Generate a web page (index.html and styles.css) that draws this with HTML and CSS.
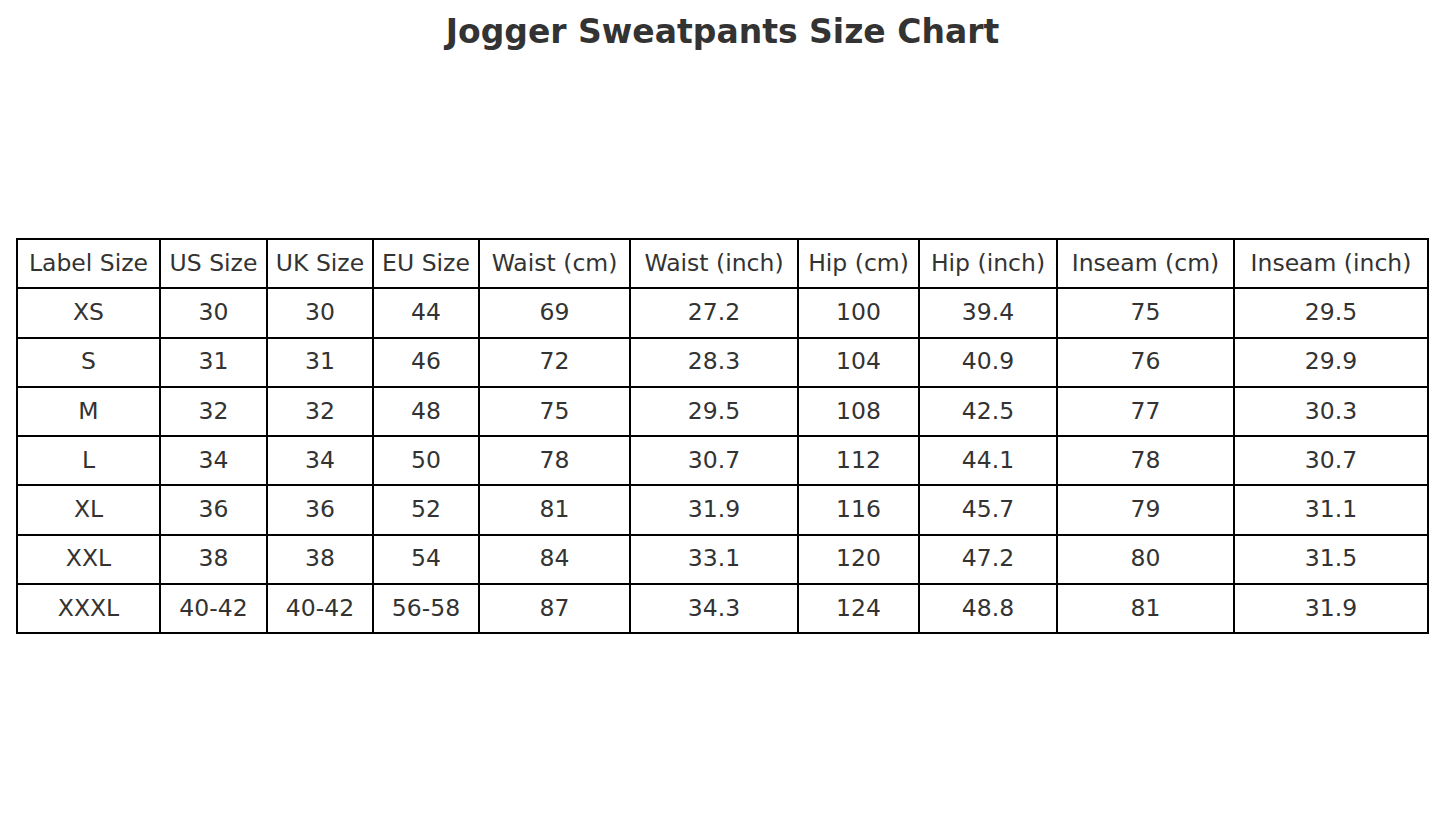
FILE: index.html
```html
<!DOCTYPE html>
<html>
<head>
<meta charset="utf-8">
<link rel="stylesheet" href="styles.css">
</head>
<body>
<h1 class="title">Jogger Sweatpants Size Chart</h1>
<table class="chart">
<colgroup>
<col class="c1"><col class="c2"><col class="c3"><col class="c4"><col class="c5"><col class="c6"><col class="c7"><col class="c8"><col class="c9"><col class="c10">
</colgroup>
<tr><td>Label Size</td><td>US Size</td><td>UK Size</td><td>EU Size</td><td>Waist (cm)</td><td>Waist (inch)</td><td>Hip (cm)</td><td>Hip (inch)</td><td>Inseam (cm)</td><td>Inseam (inch)</td></tr>
<tr><td>XS</td><td>30</td><td>30</td><td>44</td><td>69</td><td>27.2</td><td>100</td><td>39.4</td><td>75</td><td>29.5</td></tr>
<tr><td>S</td><td>31</td><td>31</td><td>46</td><td>72</td><td>28.3</td><td>104</td><td>40.9</td><td>76</td><td>29.9</td></tr>
<tr><td>M</td><td>32</td><td>32</td><td>48</td><td>75</td><td>29.5</td><td>108</td><td>42.5</td><td>77</td><td>30.3</td></tr>
<tr><td>L</td><td>34</td><td>34</td><td>50</td><td>78</td><td>30.7</td><td>112</td><td>44.1</td><td>78</td><td>30.7</td></tr>
<tr><td>XL</td><td>36</td><td>36</td><td>52</td><td>81</td><td>31.9</td><td>116</td><td>45.7</td><td>79</td><td>31.1</td></tr>
<tr><td>XXL</td><td>38</td><td>38</td><td>54</td><td>84</td><td>33.1</td><td>120</td><td>47.2</td><td>80</td><td>31.5</td></tr>
<tr><td>XXXL</td><td>40-42</td><td>40-42</td><td>56-58</td><td>87</td><td>34.3</td><td>124</td><td>48.8</td><td>81</td><td>31.9</td></tr>
</table>
</body>
</html>
```
FILE: styles.css
```css
html, body {
  margin: 0;
  padding: 0;
  background: #fff;
}
body {
  width: 1445px;
  height: 833px;
  font-family: "DejaVu Sans", sans-serif;
  color: #333;
}
.title {
  margin: 0;
  padding-top: 12px;
  text-align: center;
  font-size: 33px;
  font-weight: bold;
  line-height: 40px;
}
.chart {
  margin: 186px 0 0 16px;
  border-collapse: collapse;
  table-layout: fixed;
  width: 1413px;
}
.chart td {
  border: 2px solid #000;
  height: 45.3px;
  padding: 0 0 2px 0;
  text-align: center;
  vertical-align: middle;
  font-size: 23.5px;
  color: #333;
}
.c1 { width: 143px; }
.c2 { width: 107px; }
.c3 { width: 106px; }
.c4 { width: 106px; }
.c5 { width: 151px; }
.c6 { width: 168px; }
.c7 { width: 121px; }
.c8 { width: 138px; }
.c9 { width: 177px; }
.c10 { width: 194px; }
```
